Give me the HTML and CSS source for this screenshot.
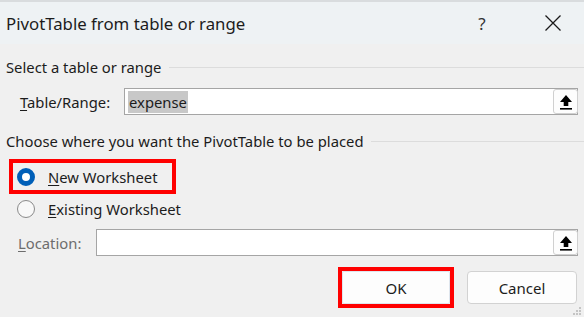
FILE: index.html
```html
<!DOCTYPE html>
<html>
<head>
<meta charset="utf-8">
<title>PivotTable from table or range</title>
<link rel="stylesheet" href="styles.css">
</head>
<body>
<div class="dialog">
  <div class="titlebar">
    <span class="title">PivotTable from table or range</span>
    <span class="help">?</span>
    <span class="close">
      <svg width="18" height="18" viewBox="0 0 18 18"><path d="M1.5 1.5 L16.5 16.5 M16.5 1.5 L1.5 16.5" stroke="#1a1a1a" stroke-width="1.3" fill="none"/></svg>
    </span>
  </div>

  <div class="content">
    <div class="group-head"><span>Select a table or range</span><span class="rule"></span></div>

    <div class="field-row range-row">
      <span class="label"><u>T</u>able/Range:</span>
      <div class="input">
        <span class="sel">expense</span>
        <span class="collapse">
          <svg width="14" height="16" viewBox="0 0 14 16"><path d="M7 1 L13 8 H9.3 V12 H4.7 V8 H1 Z" fill="#000"/><rect x="1" y="14" width="12" height="1.6" fill="#000"/></svg>
        </span>
      </div>
    </div>

    <div class="group-head second"><span>Choose where you want the PivotTable to be placed</span><span class="rule"></span></div>

    <div class="radio-row marked">
      <span class="radio on"></span>
      <span><u>N</u>ew Worksheet</span>
    </div>
    <div class="radio-row plain">
      <span class="radio"></span>
      <span><u>E</u>xisting Worksheet</span>
    </div>

    <div class="field-row location-row disabled">
      <span class="label"><u>L</u>ocation:</span>
      <div class="input">
        <span class="collapse">
          <svg width="14" height="16" viewBox="0 0 14 16"><path d="M7 1 L13 8 H9.3 V12 H4.7 V8 H1 Z" fill="#000"/><rect x="1" y="14" width="12" height="1.6" fill="#000"/></svg>
        </span>
      </div>
    </div>

    <div class="buttons">
      <div class="mark-box"><span class="btn default">OK</span></div>
      <span class="btn">Cancel</span>
    </div>
  </div>

  <svg class="grip" width="10" height="10" viewBox="0 0 10 10">
    <rect x="7" y="1" width="2" height="2" fill="#c4c4c4"/>
    <rect x="4" y="4" width="2" height="2" fill="#c4c4c4"/>
    <rect x="7" y="4" width="2" height="2" fill="#c4c4c4"/>
    <rect x="1" y="7" width="2" height="2" fill="#c4c4c4"/>
    <rect x="4" y="7" width="2" height="2" fill="#c4c4c4"/>
    <rect x="7" y="7" width="2" height="2" fill="#c4c4c4"/>
  </svg>
</div>
</body>
</html>
```

FILE: styles.css
```css
body { margin:0; background:#f0f0f0; }
.dialog {
  position:relative; width:584px; height:317px; overflow:hidden;
  background:#f0f0f0; color:#1c1c1c;
  font-family:"Noto Sans", "Open Sans", sans-serif; font-size:14.8px;
}
u { text-decoration-thickness:1px; text-underline-offset:2px; }

/* title bar */
.titlebar {
  height:42px; display:flex; align-items:center;
  background:#eef2f4; border-top:2px solid #d9dcde;
}
.title { font-size:16.8px; padding-left:6px; flex:1; }
.help { width:20px; text-align:center; font-size:17px; color:#333; margin-right:52px; }
.close { width:18px; height:18px; margin-right:22px; display:flex; }

.content { display:flex; flex-direction:column; }

/* group captions */
.group-head { height:20px; display:flex; align-items:center; margin-top:13px; padding-left:6px; }
.group-head.second { margin-top:16px; }
.group-head .rule { flex:1; height:1px; background:#dcdcdc; margin-left:8px; }

/* label + textbox rows */
.field-row { display:flex; align-items:center; height:27px; }
.range-row { margin-top:11px; }
.range-row .label { width:104px; padding-left:20px; }
.location-row { margin-top:8px; }
.location-row .label { width:78px; padding-left:18px; }
.disabled .label { color:#6d6d6d; }
.input {
  width:452px; height:25px; display:flex; align-items:center;
  background:#fff; border:1px solid #a5a5a5;
}
.location-row .input { width:480px; }
.sel { background:#c8c8c8; height:22px; line-height:22px; margin-left:3px; padding:0 1px; }
.collapse {
  margin-left:auto; width:25px; height:25px; box-sizing:border-box;
  display:flex; align-items:center; justify-content:center;
  background:#fdfdfd; border:1px solid #d0d0d0; border-radius:3px; margin-right:-1px;
}

/* option buttons */
.radio-row { display:flex; align-items:center; }
.radio-row.marked {
  margin-top:8px; margin-left:9px; width:155px; height:27px;
  border:4px solid #ff0000; padding-left:4px;
}
.radio-row.plain { margin-top:3px; height:24px; padding-left:17px; }
.radio {
  width:18px; height:18px; box-sizing:border-box; border-radius:50%;
  border:1px solid #8a8a8a; background:#f8f8f8; margin-right:13px;
}
.radio.on { border:5.5px solid #005fb8; background:#fff; }

/* dialog buttons */
.buttons { display:flex; align-items:center; margin-top:11px; padding-left:338px; }
.mark-box { border:4px solid #ff0000; }
.btn {
  display:flex; align-items:center; justify-content:center; box-sizing:border-box;
  width:110px; height:33px; background:#fdfdfd;
  border:1px solid #d2d2d2; border-radius:4px; font-size:15px;
}
.btn.default { width:108px; border-color:#dfe6ee; border-radius:2px; }
.buttons > .btn { margin-left:13px; }

.grip { position:absolute; right:2px; bottom:1px; }
```
